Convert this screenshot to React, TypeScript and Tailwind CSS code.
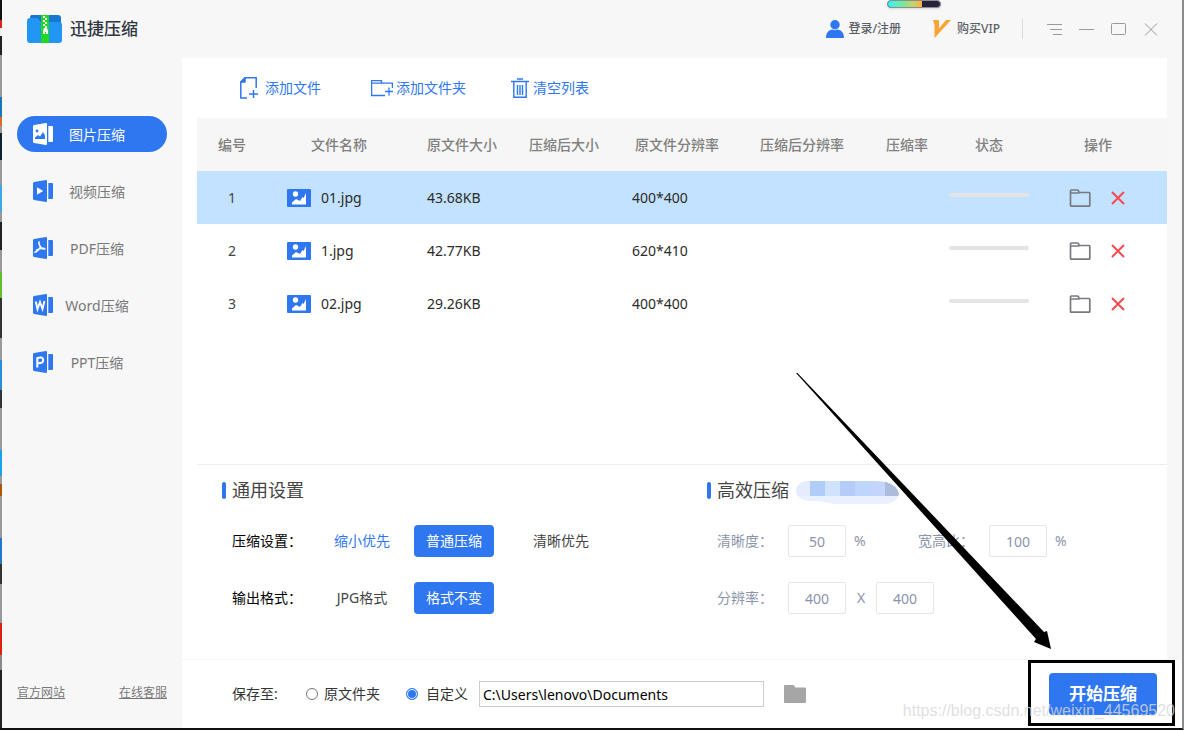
import clsx from 'clsx'
import { useState } from 'react'
import type { ReactNode } from 'react'

type FileItem = {
  id: number
  name: string
  size: string
  resolution: string
}

const files: FileItem[] = [
  { id: 1, name: '01.jpg', size: '43.68KB', resolution: '400*400' },
  { id: 2, name: '1.jpg', size: '42.77KB', resolution: '620*410' },
  { id: 3, name: '02.jpg', size: '29.26KB', resolution: '400*400' },
]

const columns = [
  { label: '编号', width: 'w-[70px]' },
  { label: '文件名称', width: 'w-[144px]' },
  { label: '原文件大小', width: 'w-[102px]' },
  { label: '压缩后大小', width: 'w-[102px]' },
  { label: '原文件分辨率', width: 'w-[124px]' },
  { label: '压缩后分辨率', width: 'w-[126px]' },
  { label: '压缩率', width: 'w-[84px]' },
  { label: '状态', width: 'w-[80px]' },
  { label: '操作', width: 'w-[138px]' },
]

const mosaic = ['#e4ecfd', '#b0ccf9', '#d0e2fc', '#b5ccf9', '#bcd6fc', '#c4d5fb', '#adbcdc']

function LogoIcon() {
  return (
    <svg width="35" height="28" viewBox="0 0 35 28" aria-hidden="true">
      <path d="M4 0h27a3 3 0 0 1 3 3v8H3V2z" fill="#1976d2" />
      <path d="M0 6a3 3 0 0 1 3-3h6c3 0 3 4 6 4h17a3 3 0 0 1 3 3v15a3 3 0 0 1-3 3H3a3 3 0 0 1-3-3z" fill="#2196f3" />
      <path d="M14 0h8v28h-8z" fill="#21d921" />
      <path
        d="M16 1h2v2h-2zM18 3h2v2h-2zM16 5h2v2h-2zM18 7h2v2h-2zM16 9h2v2h-2zM18 11h2v2h-2z"
        fill="#fff"
      />
      <path d="M17 13h3l1 3v3h-2v-2h-1v2h-2v-3z" fill="#fff" />
    </svg>
  )
}

// Two-panel document shape shared by all the sidebar entries
function DocIcon({ children }: { children: ReactNode }) {
  return (
    <svg width="20" height="22" viewBox="0 0 20 22" className="shrink-0" aria-hidden="true">
      <path d="M0 3.2Q0 2.3 1 2.1L13 0q1 0 1 1v20q0 1-1 1L1 19.9Q0 19.7 0 18.8z" fill="currentColor" />
      <path d="M15.300 3H19q1 0 1 1v14q0 1-1 1h-3.700z" fill="currentColor" />
      {children}
    </svg>
  )
}

const navItems = [
  {
    label: '图片压缩',
    icon: (
      <DocIcon>
        <circle cx="4" cy="8" r="1.4" fill="#2f77f1" />
        <path d="M2 16v-1.500l3-2.500 2 1.500 3-4.500 2 3.500V16z" fill="#2f77f1" />
      </DocIcon>
    ),
  },
  {
    label: '视频压缩',
    icon: (
      <DocIcon>
        <path d="M4 7.200v7.600L10.200 11z" fill="#fff" />
      </DocIcon>
    ),
  },
  {
    label: 'PDF压缩',
    icon: (
      <DocIcon>
        <path
          d="M6.200 5c-1 0 .3 3.600 1.300 5 1.200 1.600 3 2.300 4.500 2M7.500 9.500C7 11.500 4.500 14.500 2 15.200M3.500 13.200c2-1.200 4.500-2 7.500-1.900"
          fill="none"
          stroke="#fff"
          strokeWidth="1.5"
          strokeLinecap="round"
        />
      </DocIcon>
    ),
  },
  {
    label: 'Word压缩',
    icon: (
      <DocIcon>
        <path d="M2.800 7.500l1.700 7.500L7 8l2.500 7 2-8" fill="none" stroke="#fff" strokeWidth="1.9" />
      </DocIcon>
    ),
  },
  {
    label: 'PPT压缩',
    icon: (
      <DocIcon>
        <path
          d="M4.300 16.500V7l3.200-.5c3.500-.4 3.500 5 .2 5.400l-3.200.4"
          fill="none"
          stroke="#fff"
          strokeWidth="2"
        />
      </DocIcon>
    ),
  },
]

function Battery() {
  return (
    <div
      className="absolute top-0 right-[241px] h-2 w-[54px] overflow-hidden rounded-full border border-[#8f8a94] bg-[#26243a] shadow-sm"
      aria-hidden="true"
    >
      <div className="h-full w-[34px] bg-linear-to-r from-[#1ff3f5] via-[#7be88c] to-[#f9b233]" />
    </div>
  )
}

function TitleBar() {
  return (
    <header className="flex h-[58px] shrink-0 items-center justify-between pr-6 pl-[25px]">
      <div className="flex items-center gap-2">
        <LogoIcon />
        <h1 className="text-[17px] leading-6 font-medium text-[#2f3640]">迅捷压缩</h1>
      </div>
      <div className="flex items-center text-xs font-medium text-[#5a5f66]">
        <button type="button" className="flex items-center gap-1">
          <svg width="18" height="18" viewBox="0 0 18 18" fill="#2f77f1" aria-hidden="true">
            <circle cx="9" cy="4.7" r="4.7" />
            <path d="M0 18c0-5 3-8.500 6.500-8.500Q9 11 11.500 9.500C15 9.500 18 13 18 18z" />
          </svg>
          登录/注册
        </button>
        <button type="button" className="ml-8 flex items-center gap-1.5">
          <svg width="18" height="18" viewBox="0 0 18 18" aria-hidden="true">
            <path d="M0 0h6v8.500L13 0h5L1.500 18V5z" fill="#f9a433" />
          </svg>
          购买VIP
        </button>
        <span className="mr-6 ml-[22px] h-5 w-px bg-[#dcdcdc]" />
        <div className="flex items-center gap-[17px] text-[#9a9a9a]">
          <button type="button" aria-label="菜单">
            <svg width="15" height="15" viewBox="0 0 15 15" fill="none" stroke="currentColor">
              <path d="M0 2.500h15M3 7.500h12M6 12.500h9" />
            </svg>
          </button>
          <button type="button" aria-label="最小化">
            <svg width="15" height="15" viewBox="0 0 15 15" fill="none" stroke="currentColor">
              <path d="M0 7.500h15" />
            </svg>
          </button>
          <button type="button" aria-label="最大化">
            <svg width="15" height="15" viewBox="0 0 15 15" fill="none" stroke="currentColor">
              <rect x=".5" y="1.5" width="14" height="11" rx="1" />
            </svg>
          </button>
          <button type="button" aria-label="关闭">
            <svg width="15" height="15" viewBox="0 0 15 15" fill="none" stroke="currentColor">
              <path d="M2 1.500l12 12M14 1.500l-12 12" />
            </svg>
          </button>
        </div>
      </div>
    </header>
  )
}

function Sidebar() {
  const [active, setActive] = useState('图片压缩')

  return (
    <aside className="flex w-[180px] shrink-0 flex-col justify-between px-[15px]">
      <nav className="flex flex-col gap-[21px] pt-[58px]">
        {navItems.map((item) => (
          <button
            key={item.label}
            type="button"
            onClick={() => setActive(item.label)}
            className={clsx(
              'flex h-9 items-center rounded-full pl-4 text-sm',
              active === item.label ? 'bg-[#2f77f1] text-white' : 'text-[#2f77f1]',
            )}
          >
            {item.icon}
            <span className={clsx('w-[88px] pt-px text-center', active !== item.label && 'text-[#777777]')}>
              {item.label}
            </span>
          </button>
        ))}
      </nav>
      <div className="flex justify-between pb-[27px] text-xs text-[#777777] underline">
        <a href="#site">官方网站</a>
        <a href="#support">在线客服</a>
      </div>
    </aside>
  )
}

function Toolbar() {
  return (
    <div className="flex h-[60px] shrink-0 items-center pl-[58px] text-sm text-[#2f77f1]">
      <button type="button" className="flex items-center gap-[7px]">
        <svg width="18" height="22" viewBox="0 0 18 22" fill="none" stroke="currentColor" strokeWidth="1.5" aria-hidden="true">
          <path d="M7 21H.8V5L5 .8h11.200V11M13.500 13v8M9 17h9" />
          <path d="M1 5h4V1z" fill="currentColor" />
        </svg>
        添加文件
      </button>
      <button type="button" className="ml-[50px] flex items-center gap-[3px]">
        <svg width="22" height="18" viewBox="0 0 22 18" fill="none" stroke="currentColor" strokeWidth="1.3" aria-hidden="true">
          <path d="M14 16.500H.6V1.600h9.900v2.600h10.900V9M.6 4.200h10M18 8.500v8M14 12.500h8" />
        </svg>
        添加文件夹
      </button>
      <button type="button" className="ml-[45px] flex items-center gap-1">
        <svg width="18" height="20" viewBox="0 0 18 20" fill="none" stroke="currentColor" strokeWidth="1.4" aria-hidden="true">
          <path d="M0 3.500h18M6 1h6M2.800 3.500v15.800h12.400V3.500M6.500 7v10M9 7v10M11.500 7v10" />
        </svg>
        清空列表
      </button>
    </div>
  )
}

function FileTable() {
  const [selected, setSelected] = useState(1)

  return (
    <table className="w-full table-fixed text-sm text-[#2b2b2b]">
      <thead>
        <tr className="h-[53px] bg-[#f6f6f6] text-[#808080]">
          {columns.map((column) => (
            <th key={column.label} className={clsx('p-0 text-center font-medium', column.width)}>
              {column.label}
            </th>
          ))}
        </tr>
      </thead>
      <tbody>
        {files.map((file) => (
          <tr
            key={file.id}
            onClick={() => setSelected(file.id)}
            className={clsx('h-[53px]', selected === file.id && 'bg-[#c2e2ff]')}
          >
            <td className="text-center text-[#444444]">{file.id}</td>
            <td className="pl-5">
              <div className="flex items-center gap-2.5">
                <svg width="24" height="18" viewBox="0 0 24 18" aria-hidden="true">
                  <rect width="24" height="18" rx="1" fill="#2f77f1" />
                  <circle cx="8.5" cy="5" r="2.7" fill="#fff" />
                  <path d="M5 15.500v-2l4-3.500 4 2 2.500-4 1 1L19 4v11.500z" fill="#fff" />
                </svg>
                {file.name}
              </div>
            </td>
            <td className="pl-4">{file.size}</td>
            <td />
            <td className="pl-[17px]">{file.resolution}</td>
            <td />
            <td />
            <td className="pb-1.5">
              <div role="progressbar" aria-label="状态" aria-valuenow={0} className="h-1 rounded-full bg-[#e4e4e4]" />
            </td>
            <td>
              <div className="flex items-center justify-center gap-5 pr-0.5">
                <button type="button" aria-label="打开文件夹">
                  <svg width="22" height="18" viewBox="0 0 22 18" fill="none" stroke="#777b80" strokeWidth="1.7">
                    <path d="M1.500 4V2q0-1 1-1h5.600q1 0 1.500 1l.7 1.500h9.800q.7 0 .7.700v12.300q0 .7-.7.700H2.200q-.7 0-.7-.7zM1.500 4h9" />
                  </svg>
                </button>
                <button type="button" aria-label="删除">
                  <svg width="14" height="14" viewBox="0 0 14 14" fill="none" stroke="#f9494f" strokeWidth="2">
                    <path d="M1 1l12 12M13 1L1 13" />
                  </svg>
                </button>
              </div>
            </td>
          </tr>
        ))}
      </tbody>
    </table>
  )
}

function SectionTitle({ children }: { children: ReactNode }) {
  return (
    <h2 className="flex h-5 items-center gap-1.5 text-lg leading-5 text-[#444444]">
      <span className="h-[17px] w-1 rounded-xs bg-[#2f77f1]" />
      {children}
    </h2>
  )
}

function OptionButton({ active, className, children }: { active?: boolean; className?: string; children: ReactNode }) {
  return (
    <button
      type="button"
      className={clsx('h-8 w-20 rounded', active ? 'bg-[#2f77f1] text-white' : 'text-[#444444]', className)}
    >
      {children}
    </button>
  )
}

function NumberBox({ id, label, value }: { id: string; label?: string; value: string }) {
  return (
    <input
      id={id}
      aria-label={label}
      defaultValue={value}
      className="h-8 w-[58px] rounded-xs border border-[#e6e6e6] bg-white text-center outline-none"
    />
  )
}

function Settings() {
  return (
    <div className="grid h-[195px] shrink-0 grid-cols-2 border-t border-[#eeeeee] pt-[15px] text-sm">
      <section className="pl-[25px]">
        <SectionTitle>通用设置</SectionTitle>
        <div className="mt-[25px] flex flex-col gap-[25px] pl-2.5">
          <div className="flex items-center">
            <span className="w-[90px] text-black">压缩设置：</span>
            <OptionButton className="text-[#2f77f1]!">缩小优先</OptionButton>
            <OptionButton active className="ml-3">
              普通压缩
            </OptionButton>
            <OptionButton className="ml-[27px]">清晰优先</OptionButton>
          </div>
          <div className="flex items-center">
            <span className="w-[90px] text-black">输出格式：</span>
            <OptionButton>JPG格式</OptionButton>
            <OptionButton active className="ml-3">
              格式不变
            </OptionButton>
          </div>
        </div>
      </section>
      <section className="pl-[25px]">
        <div className="flex gap-1.5">
          <SectionTitle>高效压缩</SectionTitle>
          <svg width="104" height="24" viewBox="0 0 104 24" aria-hidden="true">
            <clipPath id="blob">
              <path d="M1 11Q2 1 14 1H80l11 1q11 3 13 12-2 9-13 10H40L24 21H14Q2 20 1 11z" />
            </clipPath>
            <g clipPath="url(#blob)">
              <path d="M0 0h104v24H0z" fill="#eaf1fe" />
              {mosaic.map((color, index) => (
                <rect key={color} x={index * 15} y="0" width="15" height="16" fill={color} />
              ))}
            </g>
          </svg>
        </div>
        <div className="mt-[21px] flex flex-col gap-[25px] pl-2.5 text-[#8c94ab]">
          <div className="flex items-center">
            <label htmlFor="clarity" className="w-[71px]">
              清晰度：
            </label>
            <NumberBox id="clarity" value="50" />
            <span className="w-[72px] pl-2">%</span>
            <label htmlFor="ratio" className="w-[71px]">
              宽高比：
            </label>
            <NumberBox id="ratio" value="100" />
            <span className="pl-2">%</span>
          </div>
          <div className="flex items-center">
            <label htmlFor="res-width" className="w-[71px]">
              分辨率：
            </label>
            <NumberBox id="res-width" value="400" />
            <span className="w-[30px] text-center">X</span>
            <NumberBox id="res-height" label="分辨率高度" value="400" />
          </div>
        </div>
      </section>
    </div>
  )
}

const radioClass =
  'size-3 appearance-none rounded-full border border-[#767676] bg-white checked:border-[#2f77f1] checked:bg-[#2f77f1] checked:shadow-[inset_0_0_0_1px_#ffffff]'

function SaveBar() {
  return (
    <footer className="flex h-[69px] shrink-0 items-center border-t border-[#f5f5f5] bg-white pr-[25px] pl-[50px] text-sm text-[#333333]">
      <span className="w-[74px]">保存至:</span>
      <label className="flex w-[100px] items-center gap-1.5">
        <input type="radio" name="target" className={radioClass} />
        原文件夹
      </label>
      <label className="flex w-[73px] items-center gap-2">
        <input type="radio" name="target" defaultChecked className={radioClass} />
        自定义
      </label>
      <input
        aria-label="保存路径"
        defaultValue="C:\Users\lenovo\Documents"
        className="h-[26px] w-[285px] border border-[#cccccc] bg-white px-[3px] text-black outline-none"
      />
      <button type="button" aria-label="选择文件夹" className="ml-5">
        <svg width="22" height="18" viewBox="0 0 22 18" fill="#a6a6a6">
          <path d="M0 1q0-1 1-1h8q1 0 1.500 1l.8 1.500H21q1 0 1 1V17q0 1-1 1H1q-1 0-1-1z" />
        </svg>
      </button>
      <div className="relative ml-auto">
        <button type="button" className="block h-[42px] w-[108px] rounded bg-[#2f77f1] text-[17px] font-bold text-white">
          开始压缩
        </button>
        <div className="pointer-events-none absolute -top-[13px] -right-[18px] -bottom-[11px] -left-[21px] border-3 border-black" />
        <span className="pointer-events-none absolute -right-[18px] -bottom-2 font-['Liberation_Sans',sans-serif] text-base whitespace-nowrap text-[#d8d8d8]/80">
          https://blog.csdn.net/weixin_44569520
        </span>
      </div>
    </footer>
  )
}

export default function App() {
  return (
    <div className="relative flex min-h-screen flex-col border-r-2 border-b-2 border-r-[#8c8c8c] border-b-[#111114] bg-[#f7f7f7] font-['Noto_Sans','Noto_Sans_CJK_SC',sans-serif]">
      <div className="flex flex-1">
        <div className="w-0.5 shrink-0 bg-[linear-gradient(#111_0_20px,#d22_20px_28px,#eee_28px_36px,#222_36px_55px,#999_55px_97px,#1676b8_97px_117px,#e0692a_117px_126px,#999_126px_133px,#123_133px_160px,#999_160px_185px,#3fa7e8_185px_212px,#999_212px_222px,#222_222px_250px,#999_250px_272px,#62c030_272px_298px,#333_298px_338px,#999_338px_360px,#2a8bd8_360px_390px,#333_390px_408px,#999_408px_450px,#1da1e6_450px_476px,#999_476px_484px,#a50_484px_496px,#999_496px_538px,#27c_538px_564px,#333_564px_584px,#999_584px_623px,#d21_623px_655px,#888_655px_670px,#222_670px)]" />
        <div className="flex min-w-0 flex-1 flex-col">
          <TitleBar />
          <div className="flex flex-1">
            <Sidebar />
            <main className="flex min-w-0 flex-1 flex-col">
              <div className="mr-[15px] flex flex-1 flex-col bg-white">
                <Toolbar />
                <div className="ml-[15px] flex flex-1 flex-col">
                  <div className="flex-1">
                    <FileTable />
                  </div>
                  <Settings />
                </div>
              </div>
              <SaveBar />
            </main>
          </div>
        </div>
      </div>
      <Battery />
      <svg
        width="256"
        height="278"
        viewBox="0 0 256 278"
        className="pointer-events-none absolute right-[130px] bottom-[77px]"
        aria-hidden="true"
      >
        <path d="M0 0l1-.5L248 259l3-1 4 18-17-7 2-3z" />
      </svg>
    </div>
  )
}
